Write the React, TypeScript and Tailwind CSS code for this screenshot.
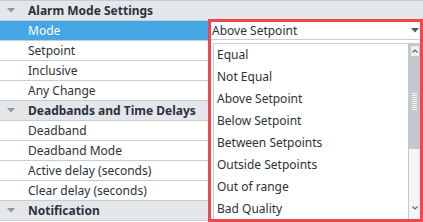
import React from "react";

const font = { fontFamily: '"Noto Sans", "Open Sans", sans-serif' };

function Caret() {
  return (
    <svg width="8" height="5" viewBox="0 0 8 5" className="shrink-0">
      <path d="M0 0 L8 0 L4 4.5 Z" fill="#8e969e" />
    </svg>
  );
}

function Header({ label }: { label: string }) {
  return (
    <div className="flex h-5 items-center border-b border-[#c9cdd2] bg-[#e4e7ea] pl-[7px] pr-[4px]">
      <Caret />
      <span className="ml-[13px] text-[12px] font-bold text-[#2b323b]">{label}</span>
    </div>
  );
}

function Row({ label, selected }: { label: string; selected?: boolean }) {
  return (
    <div className="flex h-5 border-b border-[#c9cdd2]">
      <div
        className={
          selected
            ? "flex w-[208px] items-center bg-[#45a6e5] pl-[28px] text-[12px] text-white"
            : "flex w-[208px] items-center bg-white pl-[28px] text-[12px] text-[#2b323b]"
        }
      >
        {label}
      </div>
      <div className="flex-1 border-l border-[#c9cdd2] bg-white" />
    </div>
  );
}

const options = [
  "Equal",
  "Not Equal",
  "Above Setpoint",
  "Below Setpoint",
  "Between Setpoints",
  "Outside Setpoints",
  "Out of range",
  "Bad Quality",
];

export default function App() {
  return (
    <div className="relative h-[222px] w-[423px] overflow-hidden bg-white" style={font}>
      <div className="border-t border-[#c9cdd2]">
        <Header label="Alarm Mode Settings" />
        <Row label="Mode" selected />
        <Row label="Setpoint" />
        <Row label="Inclusive" />
        <Row label="Any Change" />
        <Header label="Deadbands and Time Delays" />
        <Row label="Deadband" />
        <Row label="Deadband Mode" />
        <Row label="Active delay (seconds)" />
        <Row label="Clear delay (seconds)" />
        <Header label="Notification" />
      </div>

      <div className="absolute left-[208px] top-[19px] flex h-[203px] w-[215px] flex-col overflow-hidden border-[3px] border-[#f2464a] bg-white">
        <div className="flex h-[18px] shrink-0 items-center justify-between border-b border-[#c9cdd2] pl-[1px] pr-[1px]">
          <span className="text-[12px] text-[#2b323b]">Above Setpoint</span>
          <svg width="8" height="5" viewBox="0 0 8 5">
            <path d="M0 0 L8 0 L4 4.5 Z" fill="#505a64" />
          </svg>
        </div>
        <div className="ml-[2px] mt-[3px] flex min-h-0 flex-1 border-l border-t border-[#c9cdd2]">
          <div className="flex-1">
            {options.map((o) => (
              <div key={o} className="flex h-[22px] items-center pl-[3px] text-[12px] text-[#2b323b]">
                {o}
              </div>
            ))}
          </div>
          <div className="flex w-[12px] flex-col border-l border-[#c4c9ce] bg-[#f4f5f6]">
            <div className="flex h-[105px] flex-col items-center bg-[#c3c8cd] pt-[2px]">
              <div className="flex h-[10px] w-[8px] items-center justify-center bg-[#eef0f2]">
                <svg width="6" height="4" viewBox="0 0 6 4">
                  <path d="M0.5 3.5 L3 1 L5.5 3.5" fill="none" stroke="#5a6570" strokeWidth="1.2" />
                </svg>
              </div>
              <div className="mt-[37px] flex flex-col gap-[1px]">
                {Array.from({ length: 9 }).map((_, i) => (
                  <div key={i} className="h-[1px] w-[5px] bg-[#f4f5f6]" />
                ))}
              </div>
            </div>
            <div className="flex-1" />
            <div className="flex h-[14px] items-start justify-center pt-[1px]">
              <svg width="6" height="4" viewBox="0 0 6 4">
                <path d="M0.5 0.5 L3 3 L5.5 0.5" fill="none" stroke="#5a6570" strokeWidth="1.2" />
              </svg>
            </div>
          </div>
        </div>
      </div>
    </div>
  );
}
